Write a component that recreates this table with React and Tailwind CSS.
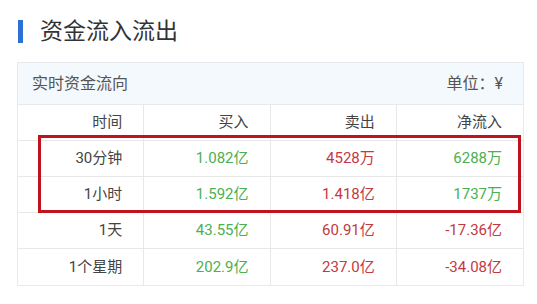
import React from "react";

const rows = [
  ["30分钟", "1.082亿", "4528万", "6288万", "g"],
  ["1小时", "1.592亿", "1.418亿", "1737万", "g"],
  ["1天", "43.55亿", "60.91亿", "-17.36亿", "r"],
  ["1个星期", "202.9亿", "237.0亿", "-34.08亿", "r"],
];

export default function App() {
  return (
    <div
      className="w-[537px] h-[304px] bg-white relative overflow-hidden"
      style={{ fontFamily: 'Roboto, "Noto Sans CJK SC", sans-serif' }}
    >
      <div className="h-[62px] flex items-center">
        <div className="ml-[18px] w-[5px] h-[23px] bg-[#2e6fd8]" />
        <div className="ml-[17px] text-[23px] text-[#333] leading-none">资金流入流出</div>
      </div>
      <div className="ml-[17px] w-[507px] border border-[#e6eaee]">
        <div className="h-[42px] bg-[#f3f9fd] border-b border-[#e6eaee] flex items-center justify-between pl-[14px] pr-[20px] text-[16px] text-[#555]">
          <span>实时资金流向</span>
          <span>单位：¥</span>
        </div>
        <div className="grid grid-cols-4 h-[36px] border-b border-[#e8e8e8] text-[15px] text-[#444]">
          {["时间", "买入", "卖出", "净流入"].map((t, i) => (
            <div
              key={t}
              className={`flex items-center justify-end pr-[21px] ${i < 3 ? "border-r border-[#e8e8e8]" : ""}`}
            >
              {t}
            </div>
          ))}
        </div>
        {rows.map((r, ri) => (
          <div
            key={r[0]}
            className={`grid grid-cols-4 h-[36px] text-[15px] ${ri < 3 ? "border-b border-[#e8e8e8]" : ""}`}
          >
            <div className="flex items-center justify-end pr-[21px] border-r border-[#e8e8e8] text-[#444]">{r[0]}</div>
            <div className="flex items-center justify-end pr-[21px] border-r border-[#e8e8e8] text-[#4caf50]">{r[1]}</div>
            <div className="flex items-center justify-end pr-[21px] border-r border-[#e8e8e8] text-[#c4393e]">{r[2]}</div>
            <div className={`flex items-center justify-end pr-[21px] ${r[4] === "g" ? "text-[#4caf50]" : "text-[#c4393e]"}`}>{r[3]}</div>
          </div>
        ))}
      </div>
      <div className="absolute left-[38px] top-[135px] w-[483px] h-[78px] border-[3px] border-[#c1121f]" />
    </div>
  );
}
